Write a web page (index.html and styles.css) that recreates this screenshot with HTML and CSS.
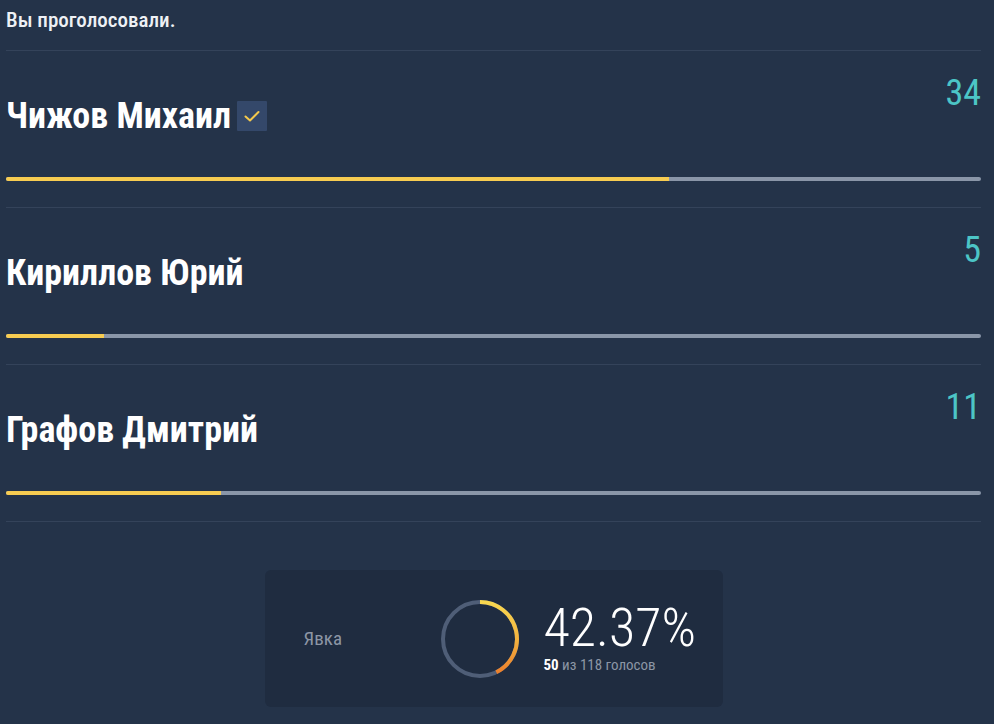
FILE: index.html
```html
<!DOCTYPE html>
<html lang="ru">
<head>
<meta charset="utf-8">
<link rel="stylesheet" href="styles.css">
</head>
<body>
<div class="poll">
  <div class="voted">Вы проголосовали.</div>
  <div class="option">
    <div class="option-head">
      <div class="name">Чижов Михаил <span class="check"><svg viewBox="0 0 30 30" width="30" height="30"><path d="M8.5 15.5 L13 19.5 L21.5 11" fill="none" stroke="#f5c94c" stroke-width="2" stroke-linecap="round" stroke-linejoin="round"/></svg></span></div>
      <div class="count">34</div>
    </div>
    <div class="bar"><div class="fill" style="width:68%"></div></div>
  </div>
  <div class="option">
    <div class="option-head">
      <div class="name">Кириллов Юрий</div>
      <div class="count">5</div>
    </div>
    <div class="bar"><div class="fill" style="width:10%"></div></div>
  </div>
  <div class="option">
    <div class="option-head">
      <div class="name">Графов Дмитрий</div>
      <div class="count">11</div>
    </div>
    <div class="bar"><div class="fill" style="width:22%"></div></div>
  </div>
  <div class="turnout-wrap">
    <div class="turnout">
      <div class="turnout-label">Явка</div>
      <svg class="donut" viewBox="0 0 80 80" width="80" height="80">
        <defs>
          <linearGradient id="g" gradientUnits="userSpaceOnUse" x1="40" y1="3" x2="40" y2="74">
            <stop offset="0" stop-color="#f8d850"/>
            <stop offset="0.55" stop-color="#f3b13e"/>
            <stop offset="1" stop-color="#eb7f2c"/>
          </linearGradient>
        </defs>
        <circle cx="40" cy="40" r="37" fill="none" stroke="#4f5e77" stroke-width="4"/>
        <path d="M40 3 A37 37 0 0 1 56.3 73.2" fill="none" stroke="url(#g)" stroke-width="4"/>
      </svg>
      <div class="turnout-stats">
        <div class="percent">42.37%</div>
        <div class="votes"><b>50</b> из 118 голосов</div>
      </div>
    </div>
  </div>
</div>
</body>
</html>
```
FILE: styles.css
```css
html, body {
  margin: 0;
  padding: 0;
  background: #243349;
}
body {
  font-family: "Roboto Condensed", Roboto, "Liberation Sans", sans-serif;
  font-stretch: condensed;
  color: #ffffff;
}
.poll {
  width: 975px;
  padding: 0 13px 0 6px;
}
.voted {
  font-size: 21px;
  font-weight: 500;
  line-height: 22px;
  padding-top: 9px;
  box-sizing: border-box;
  height: 51px;
  color: #eef1f5;
  border-bottom: 1px solid #34435a;
}
.option {
  border-bottom: 1px solid #34435a;
  padding-top: 24px;
  height: 132px;
  box-sizing: content-box;
}
.option-head {
  display: flex;
  justify-content: space-between;
  align-items: flex-start;
  height: 102px;
}
.name {
  font-size: 36px;
  font-weight: 700;
  line-height: 40px;
  margin-top: 21px;
  display: flex;
  align-items: center;
  gap: 6px;
}
.check {
  display: inline-flex;
  width: 30px;
  height: 30px;
  background: #34486a;
  border-radius: 1px;
}
.count {
  font-size: 36px;
  font-weight: 400;
  line-height: 36px;
  color: #4cc5c6;
}
.bar {
  height: 4px;
  background: #8a96a8;
  border-radius: 2px;
  overflow: hidden;
}
.fill {
  height: 100%;
  background: #f7cc51;
}
.turnout-wrap {
  display: flex;
  justify-content: center;
  padding-top: 48px;
}
.turnout {
  width: 458px;
  height: 137px;
  background: #1f2c40;
  border-radius: 6px;
  display: flex;
  align-items: center;
  box-sizing: border-box;
  padding-left: 39px;
}
.turnout-label {
  font-size: 19px;
  color: #8c96a5;
  width: 136px;
}
.donut {
  margin-right: 24px;
}
.turnout-stats {
  display: flex;
  flex-direction: column;
  margin-top: -1px;
}
.percent {
  font-size: 54px;
  font-weight: 300;
  line-height: 50px;
}
.votes {
  font-size: 15px;
  color: #8c96a5;
  line-height: 18px;
  margin-top: 3px;
}
.votes b {
  color: #ffffff;
  font-weight: 700;
}
```
